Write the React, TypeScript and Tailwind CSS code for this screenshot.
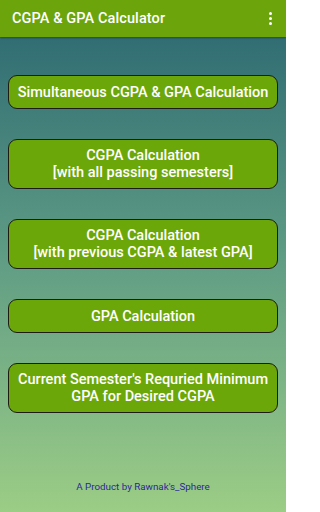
import React from 'react';

const buttons: string[][] = [
  ['Simultaneous CGPA & GPA Calculation'],
  ['CGPA Calculation', '[with all passing semesters]'],
  ['CGPA Calculation', '[with previous CGPA & latest GPA]'],
  ['GPA Calculation'],
  ["Current Semester's Requried Minimum", 'GPA for Desired CGPA'],
];

const App: React.FC = () => {
  return (
    <div className="w-[286px] h-[512px] flex flex-col overflow-hidden font-['Roboto',sans-serif] bg-gradient-to-b from-[#296670] via-[#5f9c84] to-[#9ccd85]">
      {/* Toolbar */}
      <div className="h-[37px] shrink-0 bg-[#6ba50b] flex items-center justify-between pl-3 pr-[14px] shadow-[0_1px_2px_rgba(0,0,0,0.35)] z-10">
        <span className="text-white text-[14.5px] font-medium tracking-[0.1px]">CGPA &amp; GPA Calculator</span>
        <div className="flex flex-col gap-[2px] items-center">
          <span className="w-[3px] h-[3px] bg-white rounded-full"></span>
          <span className="w-[3px] h-[3px] bg-white rounded-full"></span>
          <span className="w-[3px] h-[3px] bg-white rounded-full"></span>
        </div>
      </div>

      <div className="flex-1 flex flex-col px-2 pt-[38px]">
        {buttons.map((lines, i) => (
          <button
            key={i}
            className={`w-full bg-[#6ca70a] border-[1.5px] border-[#1c1c14] rounded-[9px] text-white text-[14.5px] font-medium leading-[17px] flex flex-col items-center justify-center mb-[30px] ${lines.length > 1 ? 'h-[50px]' : 'h-[34px]'}`}
          >
            {lines.map(l => (
              <span key={l} className="whitespace-nowrap">{l}</span>
            ))}
          </button>
        ))}
        <div className="mt-auto mb-[17px] text-center text-[9.8px] text-[#2a2a9a]">
          A Product by Rawnak's_Sphere
        </div>
      </div>
    </div>
  );
};

export default App;
